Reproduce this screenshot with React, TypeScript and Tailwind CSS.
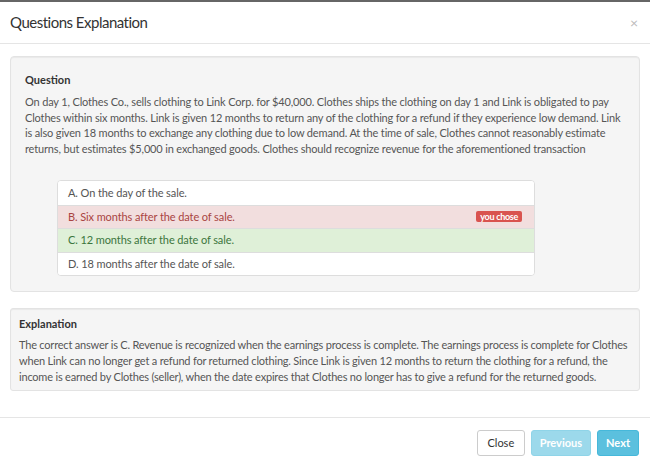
import React from "react";

const answers = [
  { t: "A. On the day of the sale.", kind: "none" },
  { t: "B. Six months after the date of sale.", kind: "wrong" },
  { t: "C. 12 months after the date of sale.", kind: "right" },
  { t: "D. 18 months after the date of sale.", kind: "none" },
];

export default function App() {
  return (
    <div className="w-[650px] h-[467px] bg-white flex flex-col text-[#555] overflow-hidden" style={{ fontFamily: "Lato, 'Open Sans', sans-serif" }}>
      <div className="h-[2px] bg-[#666] shrink-0" />
      <div className="h-[42px] shrink-0 border-b border-[#e5e5e5] flex items-center justify-between pl-[10px] pr-[12px]">
        <div className="text-[15px] tracking-[-0.5px] text-[#333] leading-none">Questions Explanation</div>
        <div className="text-[14px] text-[#bbb] leading-none">×</div>
      </div>
      <div className="h-[373px] shrink-0 px-[10px] pt-[12px] flex flex-col gap-[16px]">
        <div className="bg-[#f5f5f5] border border-[#e3e3e3] rounded-[4px] pt-[14px] pb-[15px] px-[14px] shadow-[inset_0_1px_1px_rgba(0,0,0,0.05)]">
          <div className="text-[11px] font-bold text-[#333] leading-[17px] mb-[6px]">Question</div>
          <div className="text-[11px] tracking-[-0.16px] leading-[15.5px]">
            On day 1, Clothes Co., sells clothing to Link Corp. for $40,000. Clothes ships the clothing on day 1 and Link is obligated to pay Clothes within six months. Link is given 12 months to return any of the clothing for a refund if they experience low demand. Link is also given 18 months to exchange any clothing due to low demand. At the time of sale, Clothes cannot reasonably estimate returns, but estimates $5,000 in exchanged goods. Clothes should recognize revenue for the aforementioned transaction
          </div>
          <div className="mt-[24px] ml-[32px] w-[478px] border border-[#ddd] rounded-[4px] bg-white overflow-hidden">
            {answers.map((a, i) => (
              <div
                key={i}
                className={
                  "h-[23.5px] flex items-center justify-between pl-[10px] pr-[12px] text-[11px] tracking-[-0.1px] " +
                  (i > 0 ? "border-t border-[#ddd] " : "") +
                  (a.kind === "wrong"
                    ? "bg-[#f2dede] text-[#a94442]"
                    : a.kind === "right"
                    ? "bg-[#dff0d8] text-[#3c763d]"
                    : "bg-white text-[#555]")
                }
              >
                <span>{a.t}</span>
                {a.kind === "wrong" && (
                  <span className="bg-[#d9534f] text-white font-bold text-[9px] leading-[11px] px-[4px] rounded-[2px] tracking-[-0.3px]">you chose</span>
                )}
              </div>
            ))}
          </div>
        </div>
        <div className="bg-[#f5f5f5] border border-[#e3e3e3] rounded-[3px] pt-[6px] pb-[5px] px-[8px] shadow-[inset_0_1px_1px_rgba(0,0,0,0.05)]">
          <div className="text-[11px] font-bold text-[#333] leading-[17px] mb-[5px]">Explanation</div>
          <div className="text-[11px] tracking-[-0.2px] leading-[16px]">
            The correct answer is C. Revenue is recognized when the earnings process is complete. The earnings process is complete for Clothes when Link can no longer get a refund for returned clothing. Since Link is given 12 months to return the clothing for a refund, the income is earned by Clothes (seller), when the date expires that Clothes no longer has to give a refund for the returned goods.
          </div>
        </div>
      </div>
      <div className="border-t border-[#e5e5e5] flex justify-end items-start gap-[6px] pt-[12px] pr-[11px]">
        <button className="h-[26px] px-[9.5px] text-[11px] bg-white border border-[#ccc] rounded-[3px] text-[#333]">Close</button>
        <button className="h-[26px] px-[8px] text-[11px] bg-[#5bc0de] border border-[#46b8da] rounded-[3px] text-white font-bold opacity-60">Previous</button>
        <button className="h-[26px] px-[8px] text-[11px] bg-[#5bc0de] border border-[#46b8da] rounded-[3px] text-white font-bold">Next</button>
      </div>
    </div>
  );
}
